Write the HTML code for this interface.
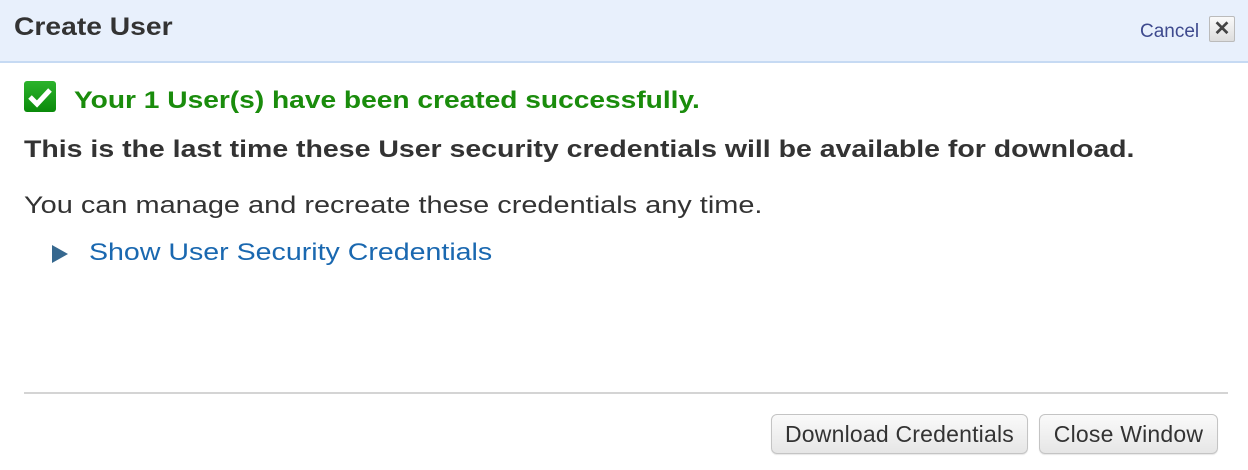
<!DOCTYPE html>
<html><head><style>
body{margin:0;width:1248px;height:470px;background:#fff;font-family:"Liberation Sans",Arial,sans-serif;position:relative;overflow:hidden}
.hdr{position:absolute;left:0;top:0;width:1248px;height:61px;background:#e8f0fc;border-bottom:2px solid #c6daf3}
.t{position:absolute;white-space:nowrap;transform-origin:0 50%}
.btn{position:absolute;top:414px;height:38px;border:1px solid #c4c4c4;border-radius:6px;background:linear-gradient(#fafafa,#e6e6e6);font-size:23px;color:#333;line-height:38px;text-align:center;box-shadow:0 1px 1px rgba(0,0,0,.1);letter-spacing:0.2px}
</style></head><body>
<div class="hdr"></div>
<div class="t" style="left:14px;top:13px;font-size:25px;font-weight:bold;color:#333;transform:scaleX(1.13)">Create User</div>
<div class="t" style="left:1140px;top:21px;font-size:19px;color:#3e4a8e">Cancel</div>
<div style="position:absolute;left:1209px;top:16px;width:24px;height:24px;border:1px solid #bbb;border-radius:2px;background:linear-gradient(#fafafa,#ddd);font-size:20px;line-height:24px;text-align:center;color:#444;font-weight:bold">✕</div>
<div style="position:absolute;left:24px;top:81px;width:32px;height:31px;background:linear-gradient(#2cb32c,#0a8a0a);border-radius:3px"></div>
<svg style="position:absolute;left:24px;top:81px" width="32" height="31"><path d="M6 16 L13 23 L26 9" stroke="#fff" stroke-width="5" fill="none"/></svg>
<div class="t" style="left:74px;top:87px;font-size:24px;font-weight:bold;color:#1a8c0c;transform:scaleX(1.172)">Your 1 User(s) have been created successfully.</div>
<div class="t" style="left:24px;top:136px;font-size:24px;font-weight:bold;color:#333;transform:scaleX(1.186)">This is the last time these User security credentials will be available for download.</div>
<div class="t" style="left:24px;top:192px;font-size:24px;color:#333;transform:scaleX(1.205)">You can manage and recreate these credentials any time.</div>
<svg style="position:absolute;left:52px;top:245px" width="16" height="18"><path d="M0 0 L16 9 L0 18Z" fill="#36688f"/></svg>
<div class="t" style="left:89px;top:239px;font-size:24px;color:#1a68b0;transform:scaleX(1.19)">Show User Security Credentials</div>
<div style="position:absolute;left:24px;top:392px;width:1204px;height:2px;background:#d4d4d4"></div>
<div class="btn" style="left:771px;width:255px">Download Credentials</div>
<div class="btn" style="left:1039px;width:177px">Close Window</div>
</body></html>
